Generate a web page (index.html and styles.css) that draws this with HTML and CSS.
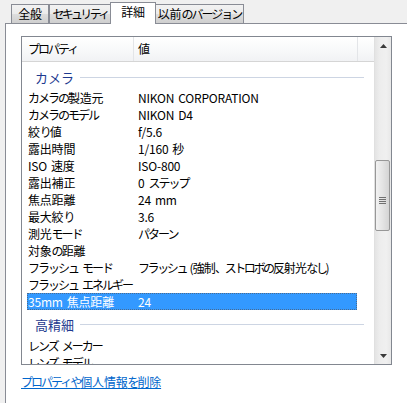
FILE: index.html
```html
<!DOCTYPE html>
<html lang="ja">
<head>
<meta charset="utf-8">
<link rel="stylesheet" href="styles.css">
</head>
<body>
<div class="dialog">
  <div class="tabs">
    <div class="tab t1">全般</div>
    <div class="tab t2"><span class="n">セキュリティ</span></div>
    <div class="tab t3 active">詳細</div>
    <div class="tab t4">以前<span class="n">のバージョン</span></div>
  </div>
  <div class="panel">
    <div class="listbox">
      <div class="main">
        <div class="header">
          <div class="hcol h1"><span class="n">プロパティ</span></div>
          <div class="hcol h2">値</div>
          <div class="hcol h3"></div>
        </div>
        <div class="rows">
          <div class="group"><span class="gtext">カメラ</span><span class="gline"></span></div>
          <div class="row"><span class="k"><span class="n">カメラの</span>製造元</span><span class="v">NIKON CORPORATION</span></div>
          <div class="row"><span class="k"><span class="n">カメラのモデル</span></span><span class="v">NIKON D4</span></div>
          <div class="row"><span class="k">絞<span class="n">り</span>値</span><span class="v">f/5.6</span></div>
          <div class="row"><span class="k">露出時間</span><span class="v">1/160 秒</span></div>
          <div class="row"><span class="k">ISO 速度</span><span class="v">ISO-800</span></div>
          <div class="row"><span class="k">露出補正</span><span class="v">0 <span class="n">ステップ</span></span></div>
          <div class="row"><span class="k">焦点距離</span><span class="v">24 mm</span></div>
          <div class="row"><span class="k">最大絞<span class="n">り</span></span><span class="v">3.6</span></div>
          <div class="row"><span class="k">測光<span class="n">モード</span></span><span class="v"><span class="n">パターン</span></span></div>
          <div class="row"><span class="k">対象<span class="n">の</span>距離</span><span class="v"></span></div>
          <div class="row"><span class="k"><span class="n">フラッシュ</span> <span class="n">モード</span></span><span class="v tight"><span class="n">フラッシュ</span> (強制<span class="n">、ストロボの</span>反射光<span class="n">なし</span>)</span></div>
          <div class="row"><span class="k"><span class="n">フラッシュ</span> <span class="n">エネルギー</span></span><span class="v"></span></div>
          <div class="row selected"><span class="k">35mm 焦点距離</span><span class="v">24</span></div>
          <div class="group g2"><span class="gtext">高精細</span><span class="gline"></span></div>
          <div class="row"><span class="k"><span class="n">レンズ</span> <span class="n">メーカー</span></span><span class="v"></span></div>
          <div class="row"><span class="k"><span class="n">レンズ</span> <span class="n">モデル</span></span><span class="v"></span></div>
        </div>
      </div>
      <div class="scrollbar">
        <div class="sbtn up"><svg width="7" height="4" viewBox="0 0 7 4"><path d="M0 4 L3.5 0 L7 4 Z" fill="#3a3a3a"/></svg></div>
        <div class="track">
          <div class="thumb">
            <div class="grip"><span></span><span></span><span></span><span></span></div>
          </div>
        </div>
        <div class="sbtn down"><svg width="7" height="4" viewBox="0 0 7 4"><path d="M0 0 L7 0 L3.5 4 Z" fill="#3a3a3a"/></svg></div>
      </div>
    </div>
    <a class="link" href="#"><span class="n">プロパティや</span>個人情報<span class="n">を</span>削除</a>
  </div>
</div>
</body>
</html>
```

FILE: styles.css
```css
html, body {
  margin: 0;
  padding: 0;
}
body {
  width: 407px;
  height: 403px;
  overflow: hidden;
  background: #f0f0f0;
  font-family: "Noto Sans CJK JP", "Noto Sans", sans-serif;
  font-size: 12px;
  letter-spacing: -0.2px;
  word-spacing: 1.5px;
  color: #000;
}
.n {
  letter-spacing: -2px;
}
.dialog {
  width: 407px;
  height: 403px;
}
.tabs {
  display: flex;
  align-items: flex-end;
  height: 23px;
  padding-left: 11px;
  box-sizing: border-box;
}
.tab {
  box-sizing: border-box;
  height: 19px;
  border: 1px solid #898c95;
  border-bottom: none;
  background: linear-gradient(#f2f2f2, #ebebeb 50%, #dddddd 51%, #cfcfcf);
  text-align: center;
  line-height: 17px;
  white-space: nowrap;
}
.t1 { width: 38px; }
.t2 { width: 62px; margin-left: 0; }
.t2 .n { letter-spacing: -2.7px; }
.t3 { width: 46px; margin-left: -1px; }
.t4 { width: 89px; margin-left: -1px; }
.tab.active {
  height: 22px;
  margin-bottom: -1px;
  background: #fff;
  position: relative;
  z-index: 2;
  line-height: 18px;
}
.panel {
  margin-left: 5px;
  width: 420px;
  height: 400px;
  border: 1px solid #898c95;
  background: #fff;
  box-sizing: border-box;
  padding: 12px 0 0 15px;
  position: relative;
  z-index: 1;
}
.listbox {
  width: 371px;
  height: 329px;
  box-sizing: border-box;
  border: 1px solid #828790;
  display: flex;
  overflow: hidden;
}
.main {
  width: 352px;
  display: flex;
  flex-direction: column;
  overflow: hidden;
}
.header {
  height: 25px;
  display: flex;
  flex-shrink: 0;
  background: linear-gradient(#ffffff, #f7f8f9 60%, #f1f2f4);
  border-bottom: 1px solid #d5d5d5;
  box-sizing: border-box;
}
.hcol {
  box-sizing: border-box;
  line-height: 24px;
  border-right: 1px solid #e3e5e8;
}
.h1 { width: 112px; padding-left: 6px; }
.h2 { width: 224px; padding-left: 4px; }
.h3 { flex: 1; border-right: none; }
.rows {
  flex: 1;
  overflow: hidden;
}
.group {
  height: 27px;
  display: flex;
  align-items: center;
  padding-left: 13px;
  padding-top: 3px;
  box-sizing: border-box;
}
.g2 { padding-top: 1px; }
.gtext {
  color: #1e3a8f;
  font-size: 13px;
  letter-spacing: 0;
}
.gline {
  flex: 1;
  height: 1px;
  background: #cdd5e3;
  margin-left: 6px;
  margin-right: 10px;
}
.row {
  height: 17px;
  margin-left: 5px;
  width: 330px;
  display: flex;
  line-height: 17px;
  white-space: nowrap;
  box-sizing: border-box;
}
.row .k {
  width: 110px;
  padding-left: 1px;
  flex-shrink: 0;
}
.row .v {
  flex: 1;
}
.row .tight {
  letter-spacing: -0.8px;
}
.row .tight .n {
  letter-spacing: -2.4px;
}
.row.selected {
  background: #3399ff;
  color: #fff;
  outline: 1px dotted #4a6b90;
  outline-offset: -1px;
}
.scrollbar {
  width: 17px;
  display: flex;
  flex-direction: column;
  background: linear-gradient(90deg, #e4e4e4, #ededed 30%, #f0f0f0 70%, #e8e8e8);
  border-left: 1px solid #e0e0e0;
  box-sizing: border-box;
}
.sbtn {
  height: 17px;
  display: flex;
  align-items: center;
  justify-content: center;
  flex-shrink: 0;
}
.track {
  flex: 1;
  padding-top: 106px;
}
.thumb {
  height: 71px;
  margin: 0 1px 0 0;
  border: 1px solid #979797;
  border-radius: 2px;
  background: linear-gradient(90deg, #f2f2f2, #e4e4e4 50%, #d4d4d4);
  display: flex;
  align-items: center;
  justify-content: center;
  box-sizing: border-box;
}
.grip {
  display: flex;
  flex-direction: column;
  gap: 1px;
  margin-top: 10px;
}
.grip span {
  display: block;
  width: 7px;
  height: 1px;
  background: #707070;
}
.link {
  display: inline-block;
  margin-top: 9px;
  color: #0066cc;
  text-decoration: underline;
  line-height: 16px;
}
```
